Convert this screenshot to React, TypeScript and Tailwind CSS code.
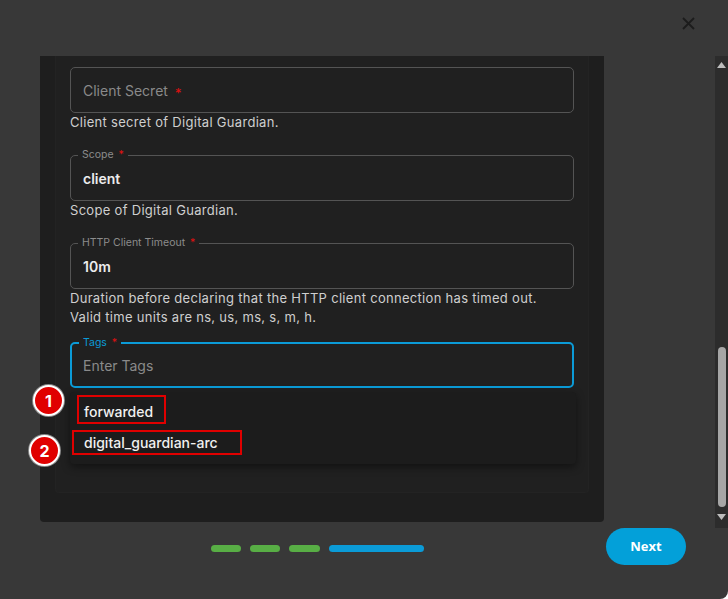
import React from 'react'

const font = { fontFamily: 'Inter, "Noto Sans", sans-serif' }

function Field({ label, value, placeholder, focused }: { label?: string; value?: string; placeholder?: string; focused?: boolean }) {
  return (
    <div
      className={`relative h-[46px] rounded-[5px] flex items-center px-3 ${
        focused ? 'border-2 border-[#0b9bd7] px-[11px]' : 'border border-[#545454]'
      }`}
    >
      {label && (
        <span
          className={`absolute -top-[8px] left-[7px] px-1 bg-[#202020] text-[10.5px] leading-[14px] ${
            focused ? 'text-[#0b9bd7]' : 'text-[#8c8c8c]'
          }`}
        >
          {label} <span className="text-[#e01010] ml-0.5">*</span>
        </span>
      )}
      {value ? (
        <span className="text-[14px] font-semibold text-[#ececec]">{value}</span>
      ) : (
        <span className="text-[14px] text-[#8a8a8a]">{placeholder}</span>
      )}
    </div>
  )
}

function Helper({ children }: { children: React.ReactNode }) {
  return <div className="text-[13px] leading-[19px] tracking-[0.3px] text-[#cfcfcf]">{children}</div>
}

function Badge({ n }: { n: number }) {
  return (
    <div className="w-[31px] h-[31px] rounded-full bg-[#e00000] border-2 border-white shadow-[0_0_0_1px_#888] flex items-center justify-center text-white font-bold text-[16px]">
      {n}
    </div>
  )
}

export default function App() {
  return (
    <div className="w-[728px] h-[599px] bg-[#383838] rounded-br-[8px] overflow-hidden relative" style={font}>
      {/* close */}
      <div className="h-[56px] flex justify-end pr-[33px] pt-[17px]">
        <svg width="13" height="13" viewBox="0 0 13 13">
          <path d="M1 1 L12 12 M12 1 L1 12" stroke="#1c1c1c" strokeWidth="1.8" />
        </svg>
      </div>

      <div className="flex">
        <div className="ml-[40px] w-[564px] h-[466px] bg-[#1e1e1e] rounded-b-[4px] overflow-hidden">
          <div className="relative mx-[15px] bg-[#202020] border-x border-b border-[#232323] rounded-b-[4px] px-[14px] pt-[11px] pb-[104px]">
            <Field placeholder="Client Secret" />
            <div className="absolute left-[119px] top-[28px] text-[#e01010] text-[13px]">*</div>
            <Helper>Client secret of Digital Guardian.</Helper>

            <div className="mt-[23px]">
              <Field label="Scope" value="client" />
            </div>
            <Helper>Scope of Digital Guardian.</Helper>

            <div className="mt-[23px]">
              <Field label="HTTP Client Timeout" value="10m" />
            </div>
            <Helper>
              Duration before declaring that the HTTP client connection has timed out.
              <br />
              Valid time units are ns, us, ms, s, m, h.
            </Helper>

            <div className="mt-[15px] relative">
              <Field label="Tags" placeholder="Enter Tags" focused />
              <div className="absolute left-0 top-[50px] w-[506px] bg-[#1c1c1c] rounded-[4px] shadow-[0_3px_8px_rgba(0,0,0,0.45)] pt-[4px] pb-[6px]">
                <div className="h-[31px] flex items-center px-[14px] text-[14px] font-medium text-[#f0f0f0]">forwarded</div>
                <div className="h-[31px] flex items-center px-[14px] text-[14px] font-medium text-[#f0f0f0]">digital_guardian-arc</div>
              </div>
            </div>
          </div>
        </div>

        <div className="flex-1" />

        {/* scrollbar */}
        <div className="w-[13px] h-[472px] bg-[#2c2c2c] flex flex-col items-center">
          <svg width="9" height="6" viewBox="0 0 9 6" className="mt-[6px]">
            <path d="M4.5 0 L9 6 L0 6 Z" fill="#bdbdbd" />
          </svg>
          <div className="flex-1" />
          <div className="w-[8px] h-[160px] rounded-full bg-[#a6a6a6]" />
          <svg width="9" height="6" viewBox="0 0 9 6" className="mt-[7px] mb-[8px]">
            <path d="M0 0 L9 0 L4.5 6 Z" fill="#bdbdbd" />
          </svg>
        </div>
      </div>

      {/* footer */}
      <div className="flex items-start">
        <div className="ml-[211px] mt-[17px] flex gap-[9px]">
          <div className="w-[30px] h-[7px] rounded-full bg-[#58ae45]" />
          <div className="w-[30px] h-[7px] rounded-full bg-[#58ae45]" />
          <div className="w-[31px] h-[7px] rounded-full bg-[#58ae45]" />
          <div className="w-[95px] h-[7px] rounded-full bg-[#0b9bd7]" />
        </div>
        <div className="ml-auto mr-[42px] w-[80px] h-[37px] rounded-full bg-[#03a0d9] flex items-center justify-center text-white font-bold text-[13px]" style={{ fontFamily: '"Open Sans", sans-serif' }}>
          Next
        </div>
      </div>

      {/* annotations */}
      <div className="absolute left-[77px] top-[395px] w-[89px] h-[29px] border-2 border-[#e00000]" />
      <div className="absolute left-[72px] top-[430px] w-[170px] h-[25px] border-2 border-[#e00000]" />
      <div className="absolute left-[33px] top-[385px]">
        <Badge n={1} />
      </div>
      <div className="absolute left-[29px] top-[435px]">
        <Badge n={2} />
      </div>
    </div>
  )
}
